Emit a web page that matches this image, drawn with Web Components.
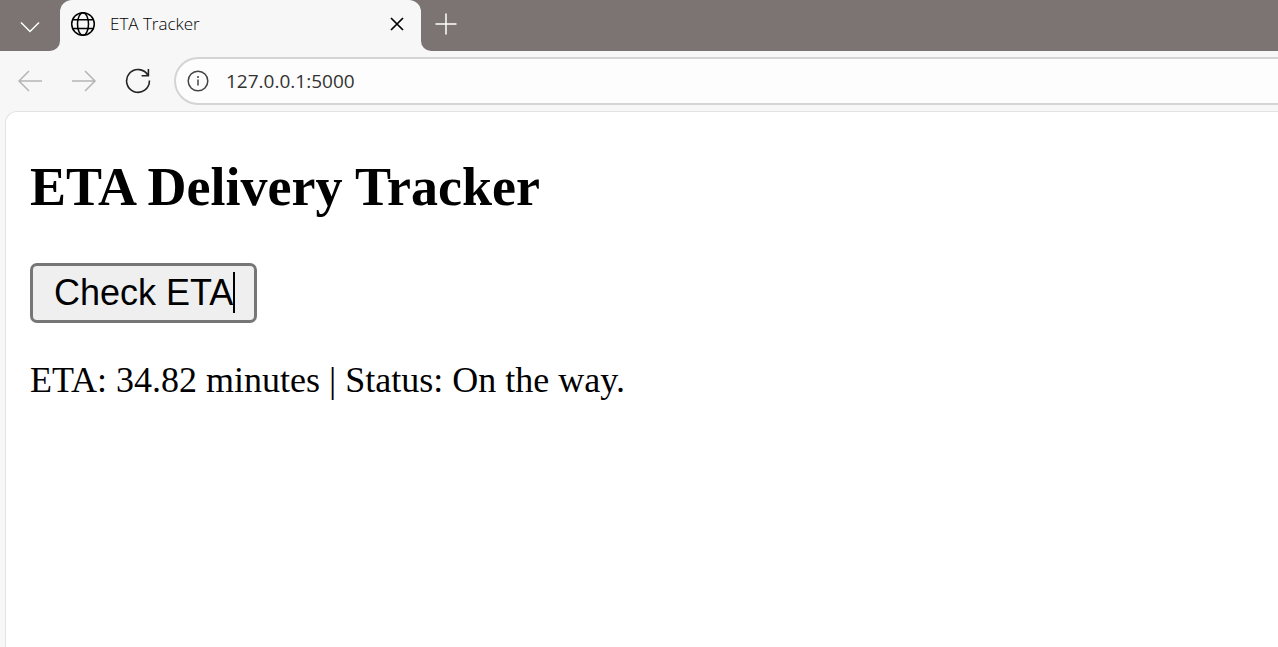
<!DOCTYPE html>
<html lang="en">
<head>
<meta charset="utf-8">
<title>ETA Tracker</title>
<style>
  html, body { margin: 0; height: 100%; }
  body { background: #f7f7f7; }
</style>
</head>
<body>
<browser-window>
  <tab-strip slot="tabs"><browser-tab>ETA Tracker</browser-tab></tab-strip>
  <nav-toolbar slot="toolbar" address="127.0.0.1:5000"></nav-toolbar>
  <eta-tracker>
    <span slot="title">ETA Delivery Tracker</span>
    <span slot="action">Check ETA</span>
    <span slot="result">ETA: 34.82 minutes | Status: On the way.</span>
  </eta-tracker>
</browser-window>

<script>
const define = (name, html, setup) => {
  const template = document.createElement('template');
  template.innerHTML = html;
  customElements.define(name, class extends HTMLElement {
    constructor() {
      super();
      this.attachShadow({ mode: 'open' }).append(template.content.cloneNode(true));
    }
    connectedCallback() { if (setup) setup(this); }
  });
};

const reset = `
  * { box-sizing: border-box; }
  svg { display: block; fill: none; stroke: currentColor; }
  button.icon { display: grid; place-items: center; flex: none; margin: 0; padding: 0; border: 0; background: none; color: inherit; }
`;

define('browser-window', `
  <style>
    ${reset}
    :host { display: flex; flex-direction: column; min-height: 100vh; overflow: hidden; background: #f7f7f7; font-family: "Open Sans", "Noto Sans", sans-serif; }
    main { flex: 1; display: grid; margin-left: 5px; border: solid #e3e3e3; border-width: 1px 0 0 1px; border-radius: 12px 0 0 0; background: #fff; }
  </style>
  <slot name="tabs"></slot>
  <slot name="toolbar"></slot>
  <main><slot></slot></main>
`);

define('tab-strip', `
  <style>
    ${reset}
    :host { display: flex; height: 51px; background: #f7f7f7; color: #fff; }
    .start, .end { display: flex; background: #7b7473; }
    .start { width: 60px; border-radius: 0 0 10px 0; }
    .end { flex: 1; border-radius: 0 0 0 10px; }
    .middle { display: flex; flex: 0 1 361px; background: linear-gradient(#7b7473 50%, #f7f7f7 50%); }
    .middle ::slotted(*) { flex: 1; }
    .start button { width: 60px; padding-top: 2px; }
    .end button { width: 50px; height: 48px; }
  </style>
  <div class="start"><button class="icon" aria-label="Tab actions">
    <svg width="20" height="12" viewBox="0 0 20 12" stroke-width="1.5"><path d="M1 1.5l9 9 9-9"/></svg>
  </button></div>
  <div class="middle"><slot></slot></div>
  <div class="end"><button class="icon" aria-label="New tab">
    <svg width="22" height="22" viewBox="0 0 22 22" stroke-width="1.5"><path d="M11 .5v21M.5 11h21"/></svg>
  </button></div>
`);

define('browser-tab', `
  <style>
    ${reset}
    :host { display: flex; align-items: center; gap: 14px; padding: 0 14px 3px 10px; border-radius: 12px 12px 0 0; background: #f7f7f7; color: #000; font-size: 17px; line-height: 24px; font-weight: 300; }
    .name { flex: 1; white-space: nowrap; }
    .close { width: 20px; height: 24px; }
  </style>
  <svg width="26" height="26" viewBox="0 0 26 26" stroke-width="1.5" aria-hidden="true">
    <circle cx="13" cy="13" r="11.3"/><ellipse cx="13" cy="13" rx="5.5" ry="11.3"/><path d="M2.5 8.8h21M2.5 17.5h21"/>
  </svg>
  <span class="name"><slot></slot></span>
  <button class="icon close" aria-label="Close tab">
    <svg width="14" height="14" viewBox="0 0 14 14" stroke-width="1.7"><path d="M1 1l12 12M13 1L1 13"/></svg>
  </button>
`);

define('nav-toolbar', `
  <style>
    ${reset}
    :host { display: flex; align-items: center; height: 59px; padding: 0 0 1px 3px; color: #222; }
    .icon { width: 54px; height: 48px; }
    .icon:disabled { color: #b5b5b5; }
    form { display: flex; align-items: center; flex: 1; height: 48px; margin: 0 0 0 9px; border: 2px solid #d4d4d4; border-right: 0; border-radius: 24px 0 0 24px; background: #fdfdfd; }
    form .icon { width: 44px; height: 44px; color: #444; }
    input { flex: 1; min-width: 0; height: 40px; margin: 0; padding: 0 0 0 6px; border: 0; outline: 0; background: none; color: #333; font: 19px/28px "Open Sans", "Noto Sans", sans-serif; }
  </style>
  <button class="icon" disabled aria-label="Back">
    <svg width="26" height="22" viewBox="0 0 26 22" stroke-width="1.5"><path d="M12 1L2 11l10 10M2 11h23"/></svg>
  </button>
  <button class="icon" disabled aria-label="Forward">
    <svg width="26" height="22" viewBox="0 0 26 22" stroke-width="1.5"><path d="M14 1l10 10-10 10M24 11H1"/></svg>
  </button>
  <button class="icon" aria-label="Refresh">
    <svg width="26" height="26" viewBox="0 0 26 26" stroke-width="1.6"><path d="M24.4 12.5A11.4 11.4 0 1 1 23.2 7.8M23.400 1v6.800h-6.800"/></svg>
  </button>
  <form>
    <button type="button" class="icon" aria-label="View site information">
      <svg width="22" height="22" viewBox="0 0 22 22" stroke-width="1.5"><circle cx="11" cy="11" r="9.8"/><path d="M11 9.5V15.5"/><circle cx="11" cy="7" r="1" fill="currentColor" stroke="none"/></svg>
    </button>
    <input type="text" aria-label="Address" spellcheck="false">
  </form>
`, host => { host.shadowRoot.querySelector('input').value = host.getAttribute('address'); });

define('eta-tracker', `
  <style>
    ${reset}
    :host { display: block; padding: 44px 24px 24px; color: #000; font: 36px/42px "Liberation Serif", "Times New Roman", serif; }
    h2 { margin: 0 0 45px; font-size: 54px; line-height: 62px; font-weight: bold; }
    button { position: relative; display: block; margin: 0; height: 60px; padding: 0 21px; border: 3px solid #767676; border-radius: 7px; background: #efefef; color: #000; font: 36px/42px "Liberation Sans", Arial, sans-serif; white-space: nowrap; }
    .caret { position: absolute; top: 6px; right: 19px; width: 2px; height: 41px; background: #000; }
    p { margin: 36px 0 0; }
  </style>
  <h2><slot name="title"></slot></h2>
  <button type="button"><slot name="action"></slot><i class="caret"></i></button>
  <p><slot name="result"></slot></p>
`);
</script>
</body>
</html>
